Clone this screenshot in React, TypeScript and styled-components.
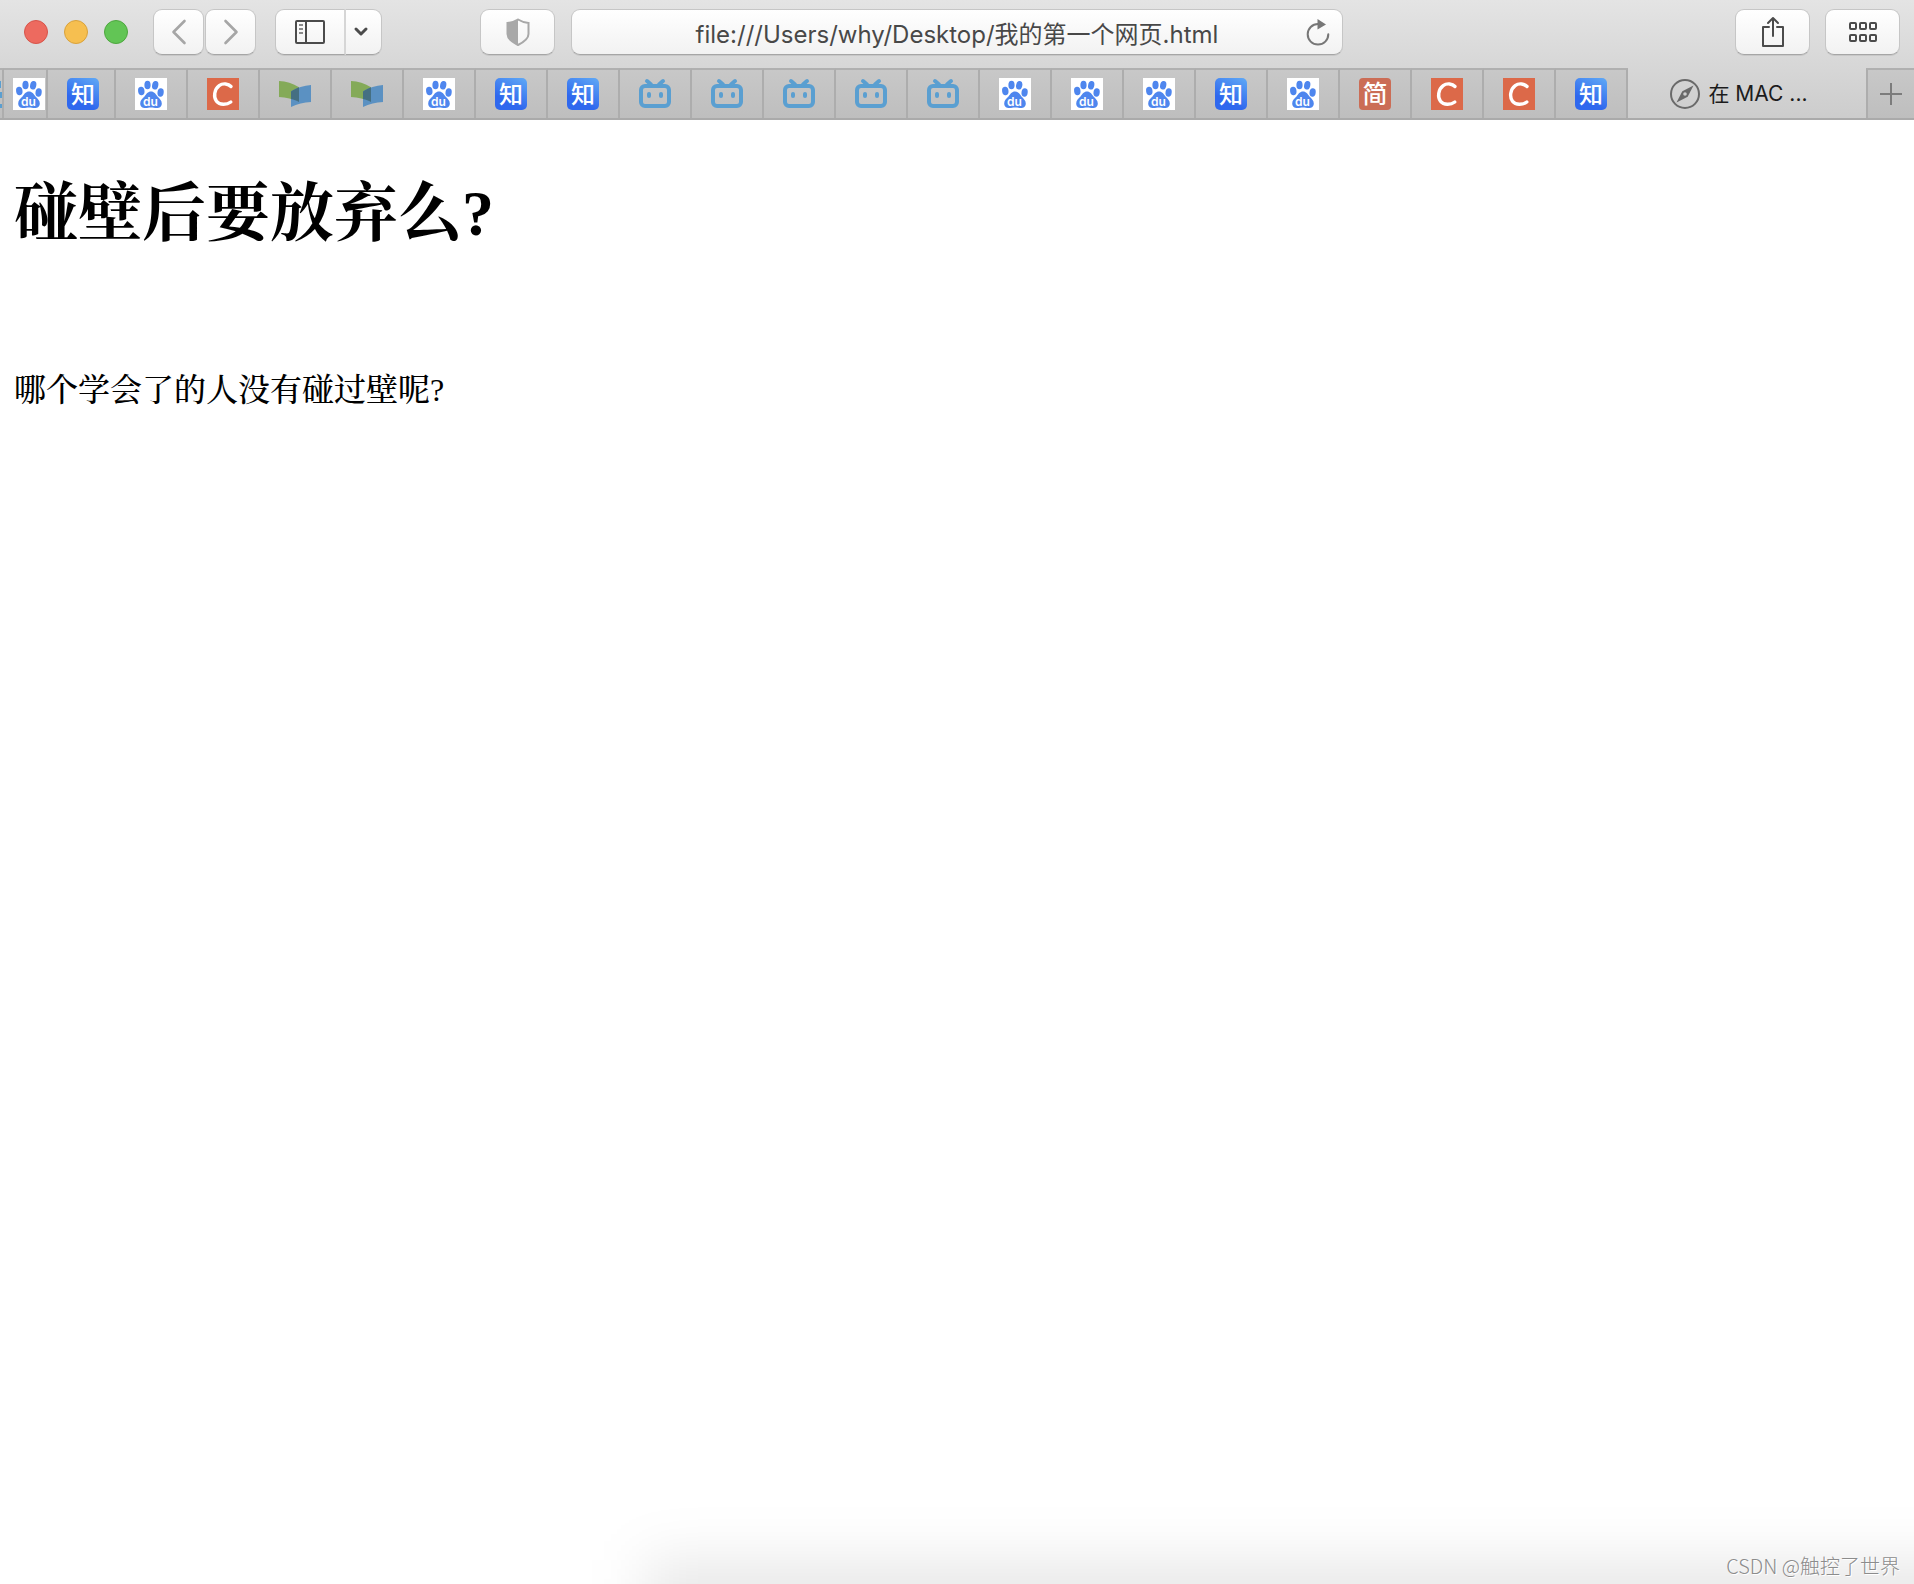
import React from "react";
import styled, { createGlobalStyle } from "styled-components";

const sans = `Inter, "Noto Sans CJK SC", sans-serif`;
const serif = `"Liberation Serif", "Songti SC", "Noto Serif CJK SC", "Noto Sans CJK SC", serif`;

const GlobalStyle = createGlobalStyle`
  *, *::before, *::after { box-sizing: border-box; }
  body { margin: 0; background: #fff; }
  button, input { font: inherit; color: inherit; }
`;

const Window = styled.div`
  position: relative;
  display: flex;
  flex-direction: column;
  min-height: 100vh;
  overflow: hidden;
  font-family: ${sans};
  background: #fff;
`;

const Chrome = styled.header`
  background: linear-gradient(#e4e4e4, #cccccc);
`;

const Toolbar = styled.div`
  display: grid;
  grid-template-columns: 1fr minmax(320px, 772px) 1fr;
  column-gap: 16px;
  align-items: center;
  height: 68px;
  padding: 0 14px 4px;
`;

const Side = styled.div<{ $end?: boolean }>`
  display: flex;
  align-items: center;
  gap: ${(p) => (p.$end ? "15px" : "0")};
  justify-content: ${(p) => (p.$end ? "flex-end" : "flex-start")};
`;

const Lights = styled.div`
  display: flex;
  gap: 16px;
  margin: 0 25px 0 10px;
`;

const Light = styled.button<{ $fill: string; $edge: string }>`
  width: 24px;
  height: 24px;
  padding: 0;
  border: 1px solid ${(p) => p.$edge};
  border-radius: 50%;
  background: ${(p) => p.$fill};
`;

const ButtonGroup = styled.div<{ $gap: number }>`
  display: flex;
  gap: ${(p) => p.$gap}px;
  margin-right: 19px;
`;

const face = `
  border: 1px solid #c6c6c6;
  border-bottom-color: #a6a6a6;
  border-radius: 9px;
  background: linear-gradient(#ffffff, #f2f2f2);
  box-shadow: 0 1px 0 rgba(0, 0, 0, 0.08);
`;

const ToolButton = styled.button<{ $width: number; $join?: "left" | "right"; $push?: boolean }>`
  display: flex;
  align-items: center;
  justify-content: center;
  flex: none;
  width: ${(p) => p.$width}px;
  height: 46px;
  padding: 0;
  color: #4b4b4b;
  ${face}
  ${(p) => p.$join === "left" && "border-radius: 9px 0 0 9px; border-right: 2px solid #d6d6d6;"}
  ${(p) => p.$join === "right" && "border-radius: 0 9px 9px 0; border-left: 0; padding-right: 6px;"}
  ${(p) => p.$push && "margin-left: auto;"}
`;

const AddressBar = styled.form`
  display: flex;
  align-items: center;
  height: 46px;
  ${face}
`;

const AddressInput = styled.input`
  flex: 1;
  min-width: 0;
  height: 44px;
  padding: 0 0 0 48px;
  border: 0;
  outline: 0;
  background: transparent;
  color: #484848;
  font-size: 24px;
  text-align: center;
`;

const ReloadButton = styled.button`
  display: flex;
  align-items: center;
  justify-content: center;
  width: 48px;
  height: 44px;
  padding: 0;
  border: 0;
  background: transparent;
  color: #777;
`;

const TabBar = styled.div`
  display: flex;
  height: 52px;
  border-bottom: 2px solid #aaaaaa;
`;

const Tab = styled.button<{ $width: number; $align?: string; $padding?: string }>`
  display: flex;
  flex: 0 0 ${(p) => p.$width}px;
  align-items: center;
  justify-content: ${(p) => p.$align ?? "center"};
  padding: ${(p) => p.$padding ?? "0"};
  border: 0;
  border-top: 2px solid #b0b0b0;
  border-right: 2px solid #adadad;
  background: linear-gradient(#c8c8c8, #bebebe);
`;

const ActiveTab = styled.button`
  display: flex;
  flex: 1;
  min-width: 0;
  align-items: center;
  justify-content: center;
  gap: 8px;
  padding: 2px 16px 0 0;
  border: 0;
  background: transparent;
  color: #1c1c1c;
  font-size: 21px;
  line-height: 32px;
  white-space: nowrap;
`;

const NewTab = styled.button`
  display: flex;
  flex: 0 0 48px;
  align-items: center;
  justify-content: center;
  padding: 0;
  border: 0;
  border-top: 2px solid #b0b0b0;
  border-left: 2px solid #adadad;
  background: linear-gradient(#c8c8c8, #bebebe);
  color: #7c7c7c;
`;

const Icon = styled.svg`
  display: block;
  flex: none;
  overflow: visible;
`;

const Article = styled.main`
  padding: 62px 14px 0;
  color: #000;
  font-family: ${serif};
`;

const Title = styled.h1`
  margin: 0 0 120px;
  font-size: 64px;
  line-height: 64px;
`;

const Paragraph = styled.p`
  margin: 0;
  font-size: 32px;
  font-weight: 500;
  line-height: 48px;
`;

const Shade = styled.div`
  position: absolute;
  left: 645px;
  right: -120px;
  bottom: -176px;
  height: 200px;
  background: rgba(0, 0, 0, 0.09);
  filter: blur(28px);
  pointer-events: none;
`;

const Watermark = styled.footer`
  position: relative;
  margin-top: auto;
  padding: 0 14px 4px;
  color: #8c8c8c;
  font-family: "Noto Sans CJK SC", sans-serif;
  font-size: 20px;
  font-weight: 300;
  line-height: 28px;
  text-align: right;
  text-shadow: 1px 1px 0 #fff;
`;

const iconText = `"Noto Sans CJK SC", sans-serif`;

const Baidu = () => (
  <Icon width="32" height="32" viewBox="0 0 32 32" aria-hidden="true">
    <rect width="32" height="32" fill="#fff" />
    <g fill="#4e86ee">
      <ellipse cx="6.300" cy="13" rx="3.200" ry="4.200" transform="rotate(-8 6.300 13)" />
      <ellipse cx="12.500" cy="7" rx="3.100" ry="4.300" />
      <ellipse cx="20.200" cy="7.300" rx="3.100" ry="4.300" transform="rotate(12 20.200 7.300)" />
      <ellipse cx="25.600" cy="14.500" rx="3.100" ry="4.200" transform="rotate(8 25.600 14.500)" />
      <path d="M16 13.500c3.200 0 4.600 2.600 6.500 5 2 2.300 4.300 3.800 4.300 6.900 0 3-2.200 4.600-5 4.600-2.200 0-3.700-.6-5.800-.6s-3.400.6-5.600.6c-3 0-5.200-1.600-5.200-4.600 0-3.200 2.300-4.600 4.300-6.900 1.900-2.400 3.300-5 6.500-5z" />
    </g>
    <text x="15.500" y="27.500" fill="#fff" fontFamily="Inter, sans-serif" fontWeight="600" fontSize="12" textAnchor="middle">du</text>
  </Icon>
);

const Zhihu = () => (
  <Icon width="32" height="32" viewBox="0 0 32 32" aria-hidden="true">
    <defs>
      <linearGradient id="zhihu" x1="0.300" y1="1" x2="0.800" y2="0">
        <stop offset="0.250" stopColor="#2f68ee" />
        <stop offset="1" stopColor="#5ba3f5" />
      </linearGradient>
    </defs>
    <rect width="32" height="32" rx="5" fill="url(#zhihu)" />
    <text x="16" y="25" fill="#fff" fontFamily={iconText} fontWeight="500" fontSize="24" textAnchor="middle">知</text>
  </Icon>
);

const Jianshu = () => (
  <Icon width="32" height="32" viewBox="0 0 32 32" aria-hidden="true">
    <rect width="32" height="32" rx="4" fill="#cb6d56" />
    <text x="16" y="25" fill="#fff" fontFamily={iconText} fontWeight="500" fontSize="25" textAnchor="middle">简</text>
  </Icon>
);

const Csdn = () => (
  <Icon width="32" height="32" viewBox="0 0 32 32" aria-hidden="true">
    <rect width="32" height="32" fill="#dc6949" />
    <path d="M24 8.500C21.500 5.800 16 4.800 12.200 7.600 7.200 11.300 6.300 19 9.500 23.200c3.200 4.200 10.300 3.800 14.300.8" fill="none" stroke="#fff" strokeWidth="3.400" strokeLinecap="round" />
  </Icon>
);

const Book = () => (
  <Icon width="32" height="32" viewBox="0 0 32 32" aria-hidden="true">
    <path d="M0 3c7 .2 14 2.300 20 6.300V24C14 20.800 7 19.400 0 19z" fill="#84aa58" />
    <path d="M12 13.500C18 9.500 25 7.500 32 7v17c-7 .5-14 2-20 5z" fill="#5b91c2" />
    <path d="M12 13.500c2.500-1.700 5-3 8-4.200V24c-2.500-1.500-5-2.300-8-3z" fill="#456f82" />
  </Icon>
);

const Bili = () => (
  <Icon width="32" height="32" viewBox="0 0 32 32" aria-hidden="true">
    <g fill="none" stroke="#5a9fd1" strokeWidth="4" strokeLinecap="round">
      <rect x="2" y="8" width="28" height="20" rx="4" />
      <path d="M8 3l4 3.500M24 3l-4 3.500" />
    </g>
    <g fill="#5a9fd1">
      <rect x="8" y="14" width="4" height="6" rx="2" />
      <rect x="20" y="14" width="4" height="6" rx="2" />
    </g>
  </Icon>
);

const BiliEdge = () => (
  <Icon width="2" height="32" viewBox="0 0 2 32" aria-hidden="true">
    <path d="M0 3h1v7H0zM0 14h2v6H0zM0 26h2v4H0z" fill="#5a9fd1" />
  </Icon>
);

const siteIcons = { baidu: Baidu, zhihu: Zhihu, jianshu: Jianshu, csdn: Csdn, book: Book, bili: Bili };
type Site = keyof typeof siteIcons;

const openTabs: Site[] = [
  "baidu", "csdn", "book", "book", "baidu", "zhihu", "zhihu",
  "bili", "bili", "bili", "bili", "bili",
  "baidu", "baidu", "baidu", "zhihu", "baidu", "jianshu", "csdn", "csdn", "zhihu",
];

const Chevron = ({ d }: { d: string }) => (
  <Icon width="16" height="26" viewBox="0 0 16 26" fill="none" stroke="#a6a6a6" strokeWidth="2.600" strokeLinecap="round" strokeLinejoin="round" aria-hidden="true">
    <path d={d} />
  </Icon>
);

export default function App() {
  return (
    <Window>
      <GlobalStyle />
      <Chrome>
        <Toolbar>
          <Side>
            <Lights>
              <Light aria-label="关闭" $fill="#ed6a5f" $edge="#d7544a" />
              <Light aria-label="最小化" $fill="#f6bf50" $edge="#d9a23c" />
              <Light aria-label="缩放" $fill="#62c555" $edge="#4ea73f" />
            </Lights>
            <ButtonGroup $gap={1}>
              <ToolButton $width={51} aria-label="后退"><Chevron d="M13.500 2L2.500 13l11 11" /></ToolButton>
              <ToolButton $width={51} aria-label="前进"><Chevron d="M2.500 2l11 11-11 11" /></ToolButton>
            </ButtonGroup>
            <ButtonGroup $gap={0}>
              <ToolButton $width={71} $join="left" aria-label="边栏">
                <Icon width="30" height="24" viewBox="0 0 30 24" fill="none" stroke="currentColor" strokeWidth="2" aria-hidden="true">
                  <rect x="1" y="1" width="28" height="22" rx="1" />
                  <path d="M11 1v22" />
                  <path d="M4 5h4M4 9h4M4 13h4" stroke="#8a8a8a" />
                </Icon>
              </ToolButton>
              <ToolButton $width={36} $join="right" aria-label="更多">
                <Icon width="14" height="10" viewBox="0 0 14 10" fill="none" stroke="currentColor" strokeWidth="3" strokeLinecap="round" strokeLinejoin="round" aria-hidden="true">
                  <path d="M2 2l5 5 5-5" />
                </Icon>
              </ToolButton>
            </ButtonGroup>
            <ToolButton $width={75} $push aria-label="隐私报告">
              <Icon width="24" height="28" viewBox="0 0 24 28" aria-hidden="true">
                <path d="M12 1.500c3.500 2.200 6.500 3 10.500 3.500v11c0 5-4.500 8-10.500 11C6 24 1.500 21 1.500 16V5C5.500 4.500 8.500 3.700 12 1.500z" fill="none" stroke="#a8a8a8" strokeWidth="2" />
                <path d="M12 1.500V27C6 24 1.500 21 1.500 16V5C5.500 4.500 8.500 3.700 12 1.500z" fill="#a8a8a8" />
              </Icon>
            </ToolButton>
          </Side>
          <AddressBar onSubmit={(e) => e.preventDefault()}>
            <AddressInput aria-label="地址" defaultValue="file:///Users/why/Desktop/我的第一个网页.html" />
            <ReloadButton type="button" aria-label="重新载入">
              <Icon width="24" height="28" viewBox="0 0 24 28" fill="none" stroke="currentColor" strokeWidth="2" aria-hidden="true">
                <path d="M12 6A10.300 10.300 0 1 0 22.300 16.300" strokeLinecap="round" />
                <path d="M11.500 1l8.500 5.500-8.500 5z" fill="currentColor" stroke="none" />
              </Icon>
            </ReloadButton>
          </AddressBar>
          <Side $end>
            <ToolButton $width={75} aria-label="共享">
              <Icon width="24" height="32" viewBox="0 0 24 32" fill="none" stroke="currentColor" strokeWidth="2" strokeLinecap="round" strokeLinejoin="round" aria-hidden="true">
                <path d="M8 11H2v19h20V11h-6" />
                <path d="M12 20V2M7 7l5-5 5 5" />
              </Icon>
            </ToolButton>
            <ToolButton $width={75} aria-label="标签页概览">
              <Icon width="28" height="20" viewBox="0 0 28 20" fill="none" stroke="currentColor" strokeWidth="2" aria-hidden="true">
                {[1, 11, 21].map((x) => [1, 13].map((y) => <rect key={`${x}-${y}`} x={x} y={y} width="6" height="6" rx="1" />))}
              </Icon>
            </ToolButton>
          </Side>
        </Toolbar>
        <TabBar>
          <Tab $width={4} aria-label="bili"><BiliEdge /></Tab>
          <Tab $width={44} $align="flex-end" $padding="0 1px 0 0" aria-label="baidu"><Baidu /></Tab>
          <Tab $width={68} $padding="0 0 0 4px" aria-label="zhihu"><Zhihu /></Tab>
          {openTabs.map((site, i) => {
            const SiteIcon = siteIcons[site];
            return <Tab key={i} $width={72} aria-label={site}><SiteIcon /></Tab>;
          })}
          <ActiveTab aria-current="page">
            <Icon width="30" height="30" viewBox="0 0 30 30" aria-hidden="true">
              <circle cx="15" cy="15" r="14" fill="none" stroke="#6a6a6a" strokeWidth="2" />
              <path d="M23.500 6.500l-5.800 11.200L6.500 23.500l5.800-11.200z" fill="#6a6a6a" />
              <circle cx="15" cy="15" r="1.800" fill="#cfcfcf" />
            </Icon>
            在 MAC ...
          </ActiveTab>
          <NewTab aria-label="新标签页">
            <Icon width="22" height="22" viewBox="0 0 22 22" stroke="currentColor" strokeWidth="2" aria-hidden="true">
              <path d="M11 0v22M0 11h22" />
            </Icon>
          </NewTab>
        </TabBar>
      </Chrome>
      <Article>
        <Title>碰壁后要放弃么?</Title>
        <Paragraph>哪个学会了的人没有碰过壁呢?</Paragraph>
      </Article>
      <Shade />
      <Watermark>CSDN @触控了世界</Watermark>
    </Window>
  );
}
